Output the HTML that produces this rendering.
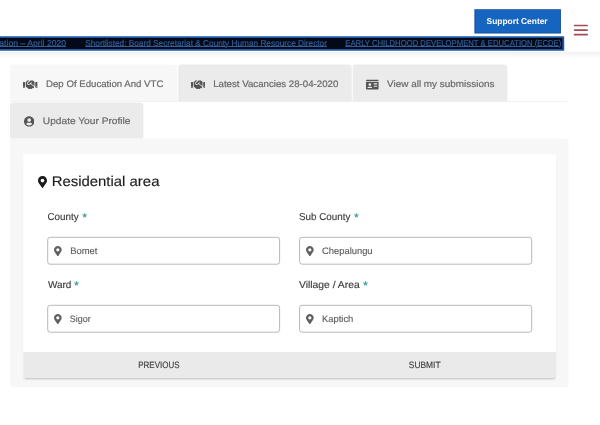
<!DOCTYPE html>
<html><head><meta charset="utf-8"><title>Residential area</title>
<style>
*{box-sizing:border-box;margin:0;padding:0}
html,body{width:600px;height:425px;overflow:hidden;background:#fff;font-family:"Liberation Sans",sans-serif;text-rendering:geometricPrecision}
body{position:relative}
.abs{position:absolute}
#bg{position:absolute;left:0;top:0}
#txt{position:absolute;left:0;top:0;width:600px;height:425px;opacity:.995}
.t{position:absolute;white-space:nowrap;line-height:1;transform-origin:0 0;display:block;font-weight:normal;font-style:normal;text-decoration:none}

</style></head><body>
<svg id="bg" width="600" height="425" viewBox="0 0 600 425">
<defs><linearGradient id="hs" x1="0" y1="0" x2="0" y2="1"><stop offset="0" stop-color="#f1f1f1"/><stop offset="1" stop-color="#ffffff"/></linearGradient><filter id="b1" x="-5%" y="-20%" width="110%" height="140%"><feGaussianBlur stdDeviation="0.8"/></filter></defs>
<rect x="0" y="51.8" width="600" height="6.5" fill="url(#hs)"/>
<path d="M474.40 9.30H560.90V33.60H474.40V9.30Z" fill="#0e4596" />
<path d="M475.30 10.10H560.10V32.70H475.30V10.10Z" fill="#1565c0" />
<path d="M-5.00 36.30H563.60A0.6 0.6 0 0 1 564.20 36.90V50.20A0.6 0.6 0 0 1 563.60 50.80H-5.00V36.30Z" fill="#1a58a6" />
<path d="M-5.00 38.00H562.30V49.10H-5.00V38.00Z" fill="#030916" />
<path d="M574.50 24.65H587.20A0.8 0.8 0 0 1 588.00 25.45V25.55A0.8 0.8 0 0 1 587.20 26.35H574.50A0.8 0.8 0 0 1 573.70 25.55V25.45A0.8 0.8 0 0 1 574.50 24.65Z" fill="#a24b57" />
<path d="M574.50 29.20H587.20A0.8 0.8 0 0 1 588.00 30.00V30.10A0.8 0.8 0 0 1 587.20 30.90H574.50A0.8 0.8 0 0 1 573.70 30.10V30.00A0.8 0.8 0 0 1 574.50 29.20Z" fill="#a24b57" />
<path d="M574.50 33.75H587.20A0.8 0.8 0 0 1 588.00 34.55V34.65A0.8 0.8 0 0 1 587.20 35.45H574.50A0.8 0.8 0 0 1 573.70 34.65V34.55A0.8 0.8 0 0 1 574.50 33.75Z" fill="#a24b57" />
<rect x="10" y="101" width="557" height="1" fill="#f1f1f1"/>
<path d="M13.50 64.60H173.80A3.5 3.5 0 0 1 177.30 68.10V101.20H10.00V68.10A3.5 3.5 0 0 1 13.50 64.60Z" fill="#f7f7f7" />
<path d="M181.70 64.60H348.30A3.5 3.5 0 0 1 351.80 68.10V101.20H178.20V68.10A3.5 3.5 0 0 1 181.70 64.60Z" fill="#ebebeb" />
<path d="M356.20 64.60H504.00A3.5 3.5 0 0 1 507.50 68.10V101.20H352.70V68.10A3.5 3.5 0 0 1 356.20 64.60Z" fill="#ebebeb" />
<path d="M13.50 102.50H139.90A3.5 3.5 0 0 1 143.40 106.00V138.80H10.00V106.00A3.5 3.5 0 0 1 13.50 102.50Z" fill="#ebebeb" />
<path d="M10.00 138.50H565.50A3 3 0 0 1 568.50 141.50V384.30A3 3 0 0 1 565.50 387.30H13.00A3 3 0 0 1 10.00 384.30V138.50Z" fill="#f7f7f7" />
<rect x="24.6" y="160" width="530.2" height="218.8" fill="#000" opacity=".26" filter="url(#b1)"/>
<path d="M23.20 154.50H556.10V377.90H23.20V154.50Z" fill="#ffffff" />
<path d="M23.20 352.00H556.10V377.90H23.20V352.00Z" fill="#eaeaea" />
<rect x="47.70" y="237.30" width="231.90" height="26.90" rx="2.5" fill="#fff" stroke="#b8b8b8" stroke-width="1"/>
<rect x="299.60" y="237.30" width="232.10" height="26.90" rx="2.5" fill="#fff" stroke="#b8b8b8" stroke-width="1"/>
<rect x="47.70" y="305.30" width="231.90" height="26.90" rx="2.5" fill="#fff" stroke="#b8b8b8" stroke-width="1"/>
<rect x="299.60" y="305.30" width="232.10" height="26.90" rx="2.5" fill="#fff" stroke="#b8b8b8" stroke-width="1"/>
</svg>
<svg class="abs" style="left:54.1px;top:245.6px" width="7.7" height="10.3" viewBox="0 0 384 512" fill="#606060"><path d="M172.268 501.67C26.97 291.031 0 269.413 0 192 0 85.961 85.961 0 192 0s192 85.961 192 192c0 77.413-26.97 99.031-172.268 309.67-9.535 13.774-29.93 13.773-39.464 0zM192 272c44.183 0 80-35.817 80-80s-35.817-80-80-80-80 35.817-80 80 35.817 80 80 80z"/></svg>
<svg class="abs" style="left:306.0px;top:245.6px" width="7.7" height="10.3" viewBox="0 0 384 512" fill="#606060"><path d="M172.268 501.67C26.97 291.031 0 269.413 0 192 0 85.961 85.961 0 192 0s192 85.961 192 192c0 77.413-26.97 99.031-172.268 309.67-9.535 13.774-29.93 13.773-39.464 0zM192 272c44.183 0 80-35.817 80-80s-35.817-80-80-80-80 35.817-80 80 35.817 80 80 80z"/></svg>
<svg class="abs" style="left:54.1px;top:313.6px" width="7.7" height="10.3" viewBox="0 0 384 512" fill="#606060"><path d="M172.268 501.67C26.97 291.031 0 269.413 0 192 0 85.961 85.961 0 192 0s192 85.961 192 192c0 77.413-26.97 99.031-172.268 309.67-9.535 13.774-29.93 13.773-39.464 0zM192 272c44.183 0 80-35.817 80-80s-35.817-80-80-80-80 35.817-80 80 35.817 80 80 80z"/></svg>
<svg class="abs" style="left:306.0px;top:313.6px" width="7.7" height="10.3" viewBox="0 0 384 512" fill="#606060"><path d="M172.268 501.67C26.97 291.031 0 269.413 0 192 0 85.961 85.961 0 192 0s192 85.961 192 192c0 77.413-26.97 99.031-172.268 309.67-9.535 13.774-29.93 13.773-39.464 0zM192 272c44.183 0 80-35.817 80-80s-35.817-80-80-80-80 35.817-80 80 35.817 80 80 80z"/></svg>
<svg class="abs" style="left:23.35px;top:79.1px" width="14.4" height="11.5" viewBox="0 0 640 512" fill="#555"><path d="M434.7 64h-85.900c-8 0-15.700 3-21.600 8.400l-98.300 90c-.1.100-.2.300-.3.400-16.600 15.600-16.300 40.500-2.100 56 12.700 13.900 39.400 17.600 56.100 2.700.1-.1.300-.1.400-.2l79.900-73.200c6.500-5.900 16.700-5.500 22.600 1 6 6.500 5.500 16.600-1 22.600l-26.100 23.900L504 313.800c2.900 2.400 5.500 5 7.900 7.700V128l-54.600-54.600c-5.900-6-14.100-9.400-22.600-9.400zM544 128.200v223.900c0 17.700 14.300 32 32 32h64V128.200h-96zm48 223.900c-8.800 0-16-7.200-16-16s7.200-16 16-16 16 7.200 16 16-7.200 16-16 16zM0 384h64c17.700 0 32-14.300 32-32V128.200H0V384zm48-63.900c8.800 0 16 7.200 16 16s-7.200 16-16 16-16-7.200-16-16c0-8.900 7.200-16 16-16zm435.900 18.600L334.600 217.500l-30 27.500c-29.700 27.100-75.200 24.500-101.700-4.400-26.900-29.400-24.800-74.900 4.400-101.700L289.100 64h-83.800c-8.500 0-16.600 3.400-22.600 9.400L128 128v223.900h18.300l90.500 81.900c27.400 22.300 67.700 18.100 90-9.300l.2-.2 17.900 15.500c15.900 13 39.400 10.500 52.300-5.400l31.400-38.600 5.400 4.400c13.700 11.100 33.900 9.100 45-4.700l9.500-11.700c11.200-13.800 9.100-33.900-4.600-45.100z"/></svg>
<svg class="abs" style="left:190.9px;top:79.1px" width="14.4" height="11.5" viewBox="0 0 640 512" fill="#555"><path d="M434.7 64h-85.900c-8 0-15.700 3-21.600 8.400l-98.300 90c-.1.100-.2.300-.3.400-16.600 15.600-16.300 40.500-2.100 56 12.700 13.900 39.400 17.600 56.100 2.700.1-.1.300-.1.400-.2l79.900-73.200c6.500-5.900 16.700-5.500 22.600 1 6 6.500 5.500 16.600-1 22.600l-26.100 23.900L504 313.800c2.900 2.400 5.500 5 7.900 7.700V128l-54.600-54.600c-5.900-6-14.100-9.400-22.600-9.400zM544 128.200v223.900c0 17.700 14.300 32 32 32h64V128.200h-96zm48 223.900c-8.800 0-16-7.200-16-16s7.200-16 16-16 16 7.200 16 16-7.200 16-16 16zM0 384h64c17.700 0 32-14.300 32-32V128.200H0V384zm48-63.900c8.800 0 16 7.200 16 16s-7.200 16-16 16-16-7.200-16-16c0-8.900 7.200-16 16-16zm435.900 18.600L334.600 217.500l-30 27.500c-29.700 27.100-75.200 24.500-101.700-4.400-26.900-29.400-24.800-74.900 4.400-101.700L289.100 64h-83.800c-8.500 0-16.600 3.400-22.600 9.400L128 128v223.900h18.300l90.500 81.900c27.400 22.300 67.700 18.100 90-9.300l.2-.2 17.900 15.500c15.900 13 39.400 10.500 52.300-5.400l31.400-38.600 5.400 4.400c13.700 11.100 33.900 9.100 45-4.700l9.500-11.700c11.200-13.800 9.100-33.900-4.600-45.100z"/></svg>
<svg class="abs" style="left:366px;top:79.2px" width="12.6" height="11.2" viewBox="0 0 576 512" fill="#555"><path d="M528 32H48C21.500 32 0 53.500 0 80v16h576V80c0-26.500-21.500-48-48-48zM0 432c0 26.500 21.500 48 48 48h480c26.500 0 48-21.500 48-48V128H0v304zm352-232c0-4.400 3.600-8 8-8h144c4.400 0 8 3.600 8 8v16c0 4.400-3.600 8-8 8H360c-4.400 0-8-3.600-8-8v-16zm0 64c0-4.400 3.600-8 8-8h144c4.400 0 8 3.600 8 8v16c0 4.400-3.600 8-8 8H360c-4.400 0-8-3.600-8-8v-16zm0 64c0-4.400 3.600-8 8-8h144c4.400 0 8 3.600 8 8v16c0 4.400-3.600 8-8 8H360c-4.400 0-8-3.600-8-8v-16zM176 192c35.300 0 64 28.700 64 64s-28.700 64-64 64-64-28.700-64-64 28.700-64 64-64zM67.100 396.200C75.500 370.500 99.600 352 128 352h8.200c12.300 5.100 25.700 8 39.800 8s27.600-2.900 39.800-8h8.200c28.400 0 52.500 18.500 60.900 44.200 3.200 9.900-5.200 19.800-15.600 19.800H82.700c-10.400 0-18.800-10-15.600-19.800z"/></svg>
<svg class="abs" style="left:23.9px;top:116.3px" width="10.4" height="10.8" viewBox="0 0 496 512" fill="#555"><path d="M248 8C111 8 0 119 0 256s111 248 248 248 248-111 248-248S385 8 248 8zm0 96c48.600 0 88 39.400 88 88s-39.400 88-88 88-88-39.400-88-88 39.400-88 88-88zm0 344c-58.700 0-111.300-26.600-146.500-68.200 18.800-35.400 55.600-59.800 98.500-59.800 2.400 0 4.800.4 7.100 1.100 13 4.200 26.600 6.900 40.900 6.900 14.300 0 28-2.700 40.900-6.900 2.300-.7 4.700-1.100 7.100-1.100 42.900 0 79.700 24.400 98.500 59.800C359.300 421.400 306.700 448 248 448z"/></svg>
<svg class="abs" style="left:38px;top:176.4px" width="9" height="12.2" viewBox="0 0 384 512" fill="#1a1a1a"><path d="M172.268 501.67C26.97 291.031 0 269.413 0 192 0 85.961 85.961 0 192 0s192 85.961 192 192c0 77.413-26.97 99.031-172.268 309.67-9.535 13.774-29.93 13.773-39.464 0zM192 272c44.183 0 80-35.817 80-80s-35.817-80-80-80-80 35.817-80 80 35.817 80 80 80z"/></svg>
<div id="txt">
<header>
<a id="t_sup" class="t" role="button" style="left:486px;top:17px;font-size:8.5px;color:#fff;font-weight:bold;transform:translateX(0.55px) scaleX(0.9870)">Support Center</a>
<div class="ticker"><a id="t_k1" class="t" style="left:-1px;top:39px;font-size:8.5px;color:#345d98;text-decoration:underline;text-underline-offset:0px;text-decoration-thickness:0.7px;-webkit-text-stroke:0.2px #345d98;transform:translateX(0.25px) scaleX(1.0185)">ation – April 2020</a><a id="t_k2" class="t" style="left:85px;top:39px;font-size:8.5px;color:#345d98;text-decoration:underline;text-underline-offset:0px;text-decoration-thickness:0.7px;-webkit-text-stroke:0.2px #345d98;transform:translateX(0.21px) scaleX(0.9708)">Shortlisted: Board Secretariat &amp; County Human Resource Director</a><a id="t_k3" class="t" style="left:345px;top:39px;font-size:8.5px;color:#345d98;text-decoration:underline;text-underline-offset:0px;text-decoration-thickness:0.7px;-webkit-text-stroke:0.2px #345d98;transform:translateX(0.32px) scaleX(0.9059)">EARLY CHILDHOOD DEVELOPMENT &amp; EDUCATION (ECDE)</a></div>
</header>
<nav class="tabs"><a id="t_tab1" class="t" role="tab" style="left:46px;top:79px;font-size:9.4px;color:#6a6a6a;-webkit-text-stroke:0.2px #6a6a6a;transform:translateX(0.03px) scaleX(1.0283)">Dep Of Education And VTC</a><a id="t_tab2" class="t" role="tab" style="left:213px;top:79px;font-size:9.4px;color:#6a6a6a;-webkit-text-stroke:0.2px #6a6a6a;transform:translateX(0.13px) scaleX(1.0328)">Latest Vacancies 28-04-2020</a><a id="t_tab3" class="t" role="tab" style="left:387px;top:79px;font-size:9.4px;color:#6a6a6a;-webkit-text-stroke:0.2px #6a6a6a;transform:translateX(0.10px) scaleX(1.0578)">View all my submissions</a><a id="t_tab4" class="t" role="tab" style="left:42px;top:116px;font-size:9.4px;color:#6a6a6a;-webkit-text-stroke:0.2px #6a6a6a;transform:translateX(0.79px) scaleX(1.0859)">Update Your Profile</a></nav>
<main><form onsubmit="return false">
<h2 id="t_h" class="t" style="left:51px;top:174px;font-size:14px;color:#1c1c1c;-webkit-text-stroke:0.15px #1c1c1c;transform:translateX(0.67px) scaleX(1.0650)">Residential area</h2>
<div class="field"><label id="t_l1" class="t" style="left:47px;top:213px;font-size:10px;color:#3c3c3c;-webkit-text-stroke:0.15px #3c3c3c;transform:translateX(0.41px) scaleX(0.9856)">County</label><span id="t_a1" class="t" aria-hidden="true" style="left:82px;top:213px;font-size:11px;color:#35a193;-webkit-text-stroke:0.3px #35a193;transform:translateX(0.55px) scaleX(1.0133)">*</span><span id="t_i1" class="t" role="textbox" style="left:70px;top:246px;font-size:9.4px;color:#5e5e5e;-webkit-text-stroke:0.15px #5e5e5e;transform:translateX(0.15px) scaleX(1.0057)">Bomet</span></div>
<div class="field"><label id="t_l2" class="t" style="left:299px;top:213px;font-size:10px;color:#3c3c3c;-webkit-text-stroke:0.15px #3c3c3c;transform:translateX(0.01px) scaleX(0.9816)">Sub County</label><span id="t_a2" class="t" aria-hidden="true" style="left:354px;top:213px;font-size:11px;color:#35a193;-webkit-text-stroke:0.3px #35a193;transform:translateX(0.15px) scaleX(1.0133)">*</span><span id="t_i2" class="t" role="textbox" style="left:322px;top:246px;font-size:9.4px;color:#5e5e5e;-webkit-text-stroke:0.15px #5e5e5e;transform:translateX(0.00px) scaleX(1.0000)">Chepalungu</span></div>
<div class="field"><label id="t_l3" class="t" style="left:47px;top:281px;font-size:10px;color:#3c3c3c;-webkit-text-stroke:0.15px #3c3c3c;transform:translateX(0.90px) scaleX(0.9957)">Ward</label><span id="t_a3" class="t" aria-hidden="true" style="left:74px;top:281px;font-size:11px;color:#35a193;-webkit-text-stroke:0.3px #35a193;transform:translateX(0.34px) scaleX(1.0400)">*</span><span id="t_i3" class="t" role="textbox" style="left:69px;top:314px;font-size:9.4px;color:#5e5e5e;-webkit-text-stroke:0.15px #5e5e5e;transform:translateX(0.82px) scaleX(0.9506)">Sigor</span></div>
<div class="field"><label id="t_l4" class="t" style="left:298px;top:281px;font-size:10px;color:#3c3c3c;-webkit-text-stroke:0.15px #3c3c3c;transform:translateX(0.94px) scaleX(1.0342)">Village / Area</label><span id="t_a4" class="t" aria-hidden="true" style="left:363px;top:281px;font-size:11px;color:#35a193;-webkit-text-stroke:0.3px #35a193;transform:translateX(0.34px) scaleX(1.0400)">*</span><span id="t_i4" class="t" role="textbox" style="left:322px;top:314px;font-size:9.4px;color:#5e5e5e;-webkit-text-stroke:0.15px #5e5e5e;transform:translateX(0.05px) scaleX(1.0000)">Kaptich</span></div>
<div class="card-action"><span id="t_b1" class="t" role="button" style="left:138px;top:361px;font-size:9.2px;color:#3c3c3c;-webkit-text-stroke:0.15px #3c3c3c;transform:translateX(0.25px) scaleX(0.8692)">PREVIOUS</span><span id="t_b2" class="t" role="button" style="left:408px;top:361px;font-size:9.2px;color:#3c3c3c;-webkit-text-stroke:0.15px #3c3c3c;transform:translateX(0.84px) scaleX(0.9147)">SUBMIT</span></div>
</form></main>
</div>
</body></html>
